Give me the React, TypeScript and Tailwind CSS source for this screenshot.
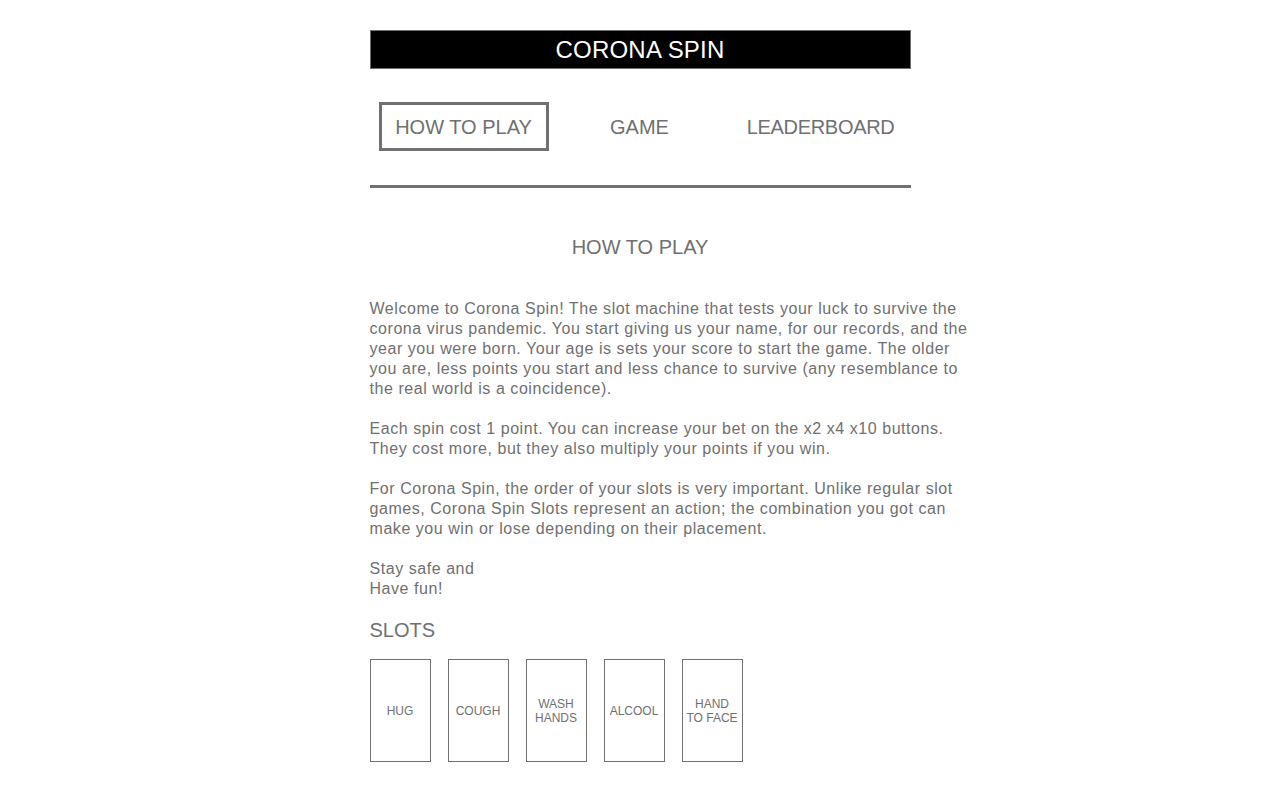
const slots = [
  ["HUG"],
  ["COUGH"],
  ["WASH", "HANDS"],
  ["ALCOOL"],
  ["HAND", "TO FACE"],
];

const paragraphs = [
  [
    "Welcome to Corona Spin! The slot machine that tests your luck to survive the",
    "corona virus pandemic. You start giving us your name, for our records, and the",
    "year you were born. Your age is sets your score to start the game. The older",
    "you are, less points you start and less chance to survive (any resemblance to",
    "the real world is a coincidence).",
  ],
  [
    "Each spin cost 1 point. You can increase your bet on the x2 x4 x10 buttons.",
    "They cost more, but they also multiply your points if you win.",
  ],
  [
    "For Corona Spin, the order of your slots is very important. Unlike regular slot",
    "games, Corona Spin Slots represent an action; the combination you got can",
    "make you win or lose depending on their placement.",
  ],
  ["Stay safe and", "Have fun!"],
];

export default function App() {
  return (
    <div
      className="min-h-screen bg-white text-[#707070]"
      style={{ fontFamily: '"Liberation Sans", Arial, sans-serif' }}
    >
      <div className="mx-auto w-[541px] pt-[30px]">
        <div className="h-[39px] bg-black border border-[#707070] flex items-center justify-center text-white text-[24px] tracking-[0.2px]">
          CORONA SPIN
        </div>

        <nav className="mt-[33px] flex items-center pl-[9px]">
          <button className="w-[170px] h-[49px] border-[3px] border-[#707070] text-[20px]">
            HOW TO PLAY
          </button>
          <button className="ml-[41px] w-[100px] text-center text-[20px]">GAME</button>
          <button className="w-[205px] text-right text-[20px] tracking-[-0.3px]">LEADERBOARD</button>
        </nav>
        <div className="mt-[34px] h-[3px] bg-[#707070]" />

        <h2 className="mt-[48px] text-center text-[20px] leading-[23px]">HOW TO PLAY</h2>

        <div className="mt-[40px] w-[620px] text-[16px] leading-[20px] space-y-[20px] tracking-[0.55px]">
          {paragraphs.map((p, i) => (
            <p key={i} className="whitespace-nowrap">
              {p.map((line, j) => (
                <span key={j} className="block">
                  {line}
                </span>
              ))}
            </p>
          ))}
        </div>

        <h3 className="mt-[20px] text-[20px] leading-[23px]">SLOTS</h3>
        <div className="mt-[17px] flex gap-[17px]">
          {slots.map((s) => (
            <div
              key={s.join(" ")}
              className="w-[61px] h-[103px] border border-[#707070] flex flex-col items-center justify-center text-[12px] leading-[14px] text-center"
            >
              {s.map((l) => (
                <span key={l}>{l}</span>
              ))}
            </div>
          ))}
        </div>
      </div>
    </div>
  );
}
